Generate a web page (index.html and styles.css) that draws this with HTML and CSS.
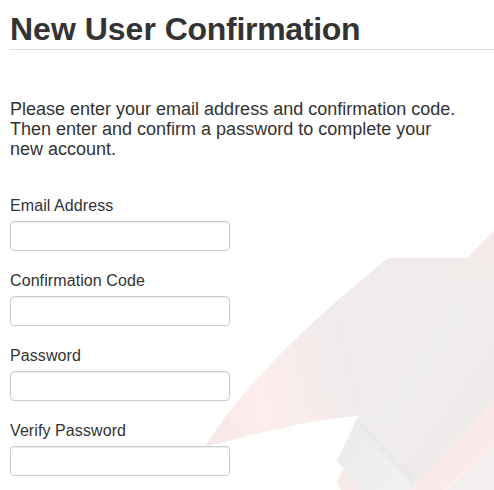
FILE: index.html
```
<!DOCTYPE html>
<html lang="en">
<head>
<meta charset="utf-8">
<title>New User Confirmation</title>
<link rel="stylesheet" href="styles.css">
</head>
<body>
<svg class="backdrop" viewBox="0 0 494 490" aria-hidden="true">
  <defs>
    <linearGradient id="wing" gradientUnits="userSpaceOnUse" x1="205" y1="440" x2="372" y2="400">
      <stop offset="0" stop-color="#f2e8e8"/>
      <stop offset=".15" stop-color="#f9eaea"/>
      <stop offset=".36" stop-color="#feeded"/>
      <stop offset=".6" stop-color="#f8ecec"/>
      <stop offset=".8" stop-color="#f2ebeb"/>
      <stop offset="1" stop-color="#efeceb"/>
    </linearGradient>
    <linearGradient id="panel" gradientUnits="userSpaceOnUse" x1="385" y1="340" x2="470" y2="400">
      <stop offset="0" stop-color="#f2edec"/>
      <stop offset=".4" stop-color="#f0eeed"/>
      <stop offset="1" stop-color="#efebea"/>
    </linearGradient>
    <linearGradient id="sheen" gradientUnits="userSpaceOnUse" x1="455" y1="300" x2="494" y2="232">
      <stop offset="0" stop-color="#f5ebea" stop-opacity="0"/>
      <stop offset="1" stop-color="#f5eaea"/>
    </linearGradient>
    <linearGradient id="block" gradientUnits="userSpaceOnUse" x1="340" y1="430" x2="400" y2="485">
      <stop offset="0" stop-color="#ebebeb"/>
      <stop offset="1" stop-color="#f0f0f0"/>
    </linearGradient>
  </defs>
  <path fill="url(#wing)" d="M205 447Q253 367 388 258H470V340L358 416Q313 418 205 447Z"/>
  <path fill="url(#panel)" d="M358 416C391 346 418 307 494 231V490H420Z"/>
  <path fill="url(#sheen)" d="M415 322Q448 277 494 231V310Z"/>
  <path fill="none" stroke="#f5eceb" stroke-width="2" d="M359 416C392 346 419 307 494 232"/>
  <path fill="#f7eaea" d="M342 470L337 483L341 490H361L346 471Z"/>
  <path fill="url(#block)" d="M358 416L337 461L361 490H413L418 480Z"/>
  <path fill="#e9e9e9" d="M357 418L360 428L413 485L418 480L362 423Z"/>
  <path fill="none" stroke="#f6ebea" d="M358 417L419 479M338 461L361 490"/>
  <path fill="#faeaea" d="M494 400L411 490H443L494 445Z"/>
  <path fill="#f3efee" d="M494 445L443 490H494Z"/>
  <path fill="none" stroke="#fef0ee" stroke-width="2" d="M494 446L443 491"/>
</svg>
<main class="page">
  <h1 class="title">New User <span class="tight">Confirmation</span></h1>
  <p class="intro">Please enter your email address and confirmation code. Then enter and confirm a password to complete your new account.</p>
  <form class="form">
    <label class="field">Email Address<input class="input" type="text"></label>
    <label class="field">Confirmation Code<input class="input" type="text"></label>
    <label class="field">Password<input class="input" type="password"></label>
    <label class="field">Verify Password<input class="input" type="password"></label>
  </form>
</main>
</body>
</html>
```
FILE: styles.css
```
* {
  box-sizing: border-box;
}

body {
  margin: 0;
  height: 490px;
  overflow: hidden;
  background: #fff;
  color: #333;
  font-family: "Liberation Sans", Arial, sans-serif;
  font-size: 16px;
  line-height: 20px;
}

.backdrop {
  position: absolute;
  top: 0;
  left: 0;
  z-index: -1;
  width: 494px;
  height: 490px;
}

.page {
  padding: 9px 0 0 10px;
}

.title {
  margin: 0;
  height: 41px;
  border-bottom: 1px solid #ddd;
  font-size: 32px;
  line-height: 40px;
}

.tight {
  letter-spacing: -0.3px;
}

.intro {
  width: 450px;
  margin: 49px 0 37px;
  font-size: 18px;
}

.form {
  display: flex;
  flex-direction: column;
  gap: 20px;
}

.field {
  display: flex;
  flex-direction: column;
  gap: 5px;
  width: 220px;
  letter-spacing: 0.09px;
}

.input {
  width: 220px;
  height: 30px;
  padding: 4px 6px;
  border: 1px solid #ccc;
  border-radius: 4px;
  background: #fff;
  box-shadow: inset 0 1px 1px rgba(0, 0, 0, 0.075);
}
```
